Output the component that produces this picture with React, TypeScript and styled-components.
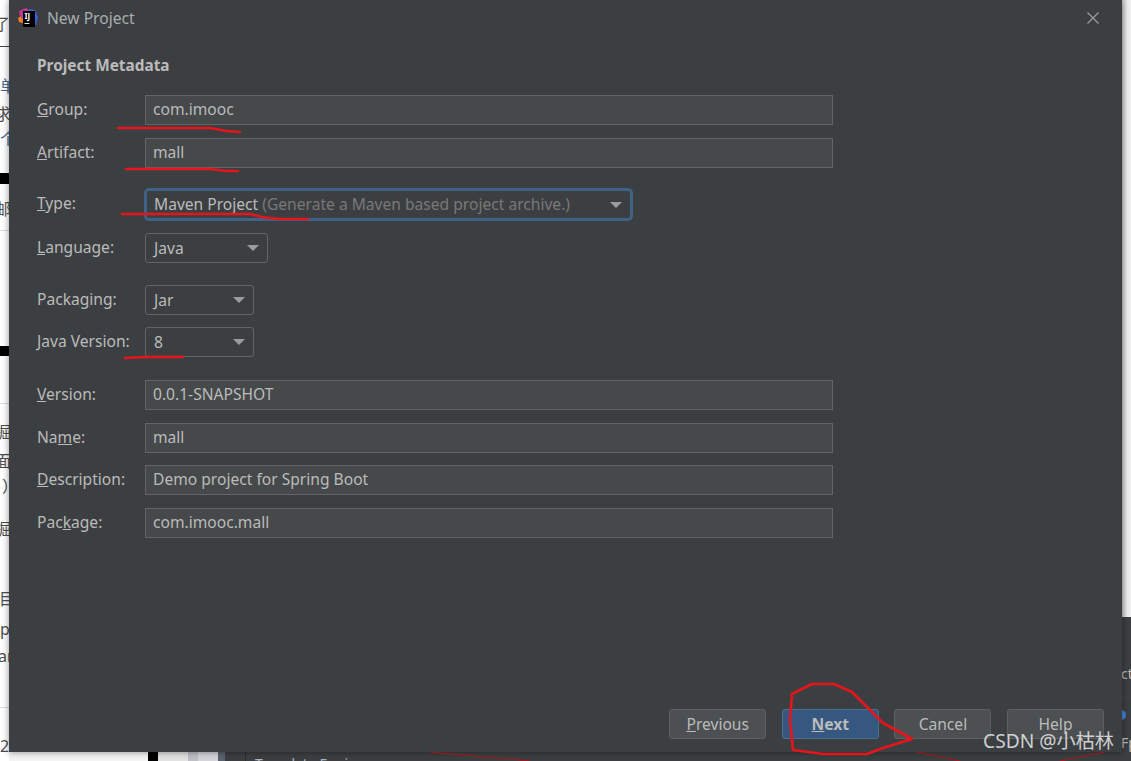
import styled, { createGlobalStyle } from "styled-components";

const GlobalStyle = createGlobalStyle`
  html, body {
    margin: 0;
    padding: 0;
    background: #fff;
  }
`;

const uiFont = `"Noto Sans", "Noto Sans CJK SC", sans-serif`;

const Page = styled.div`
  position: relative;
  width: 1131px;
  height: 761px;
  overflow: hidden;
  display: flex;
  background: #fff;
  font-family: ${uiFont};
`;

// what is left of the blog page behind the dialog
const LeftStrip = styled.div`
  width: 9px;
  height: 761px;
  overflow: hidden;
  display: flex;
  flex-direction: column;
  flex-shrink: 0;
`;

const Frag = styled.div<{ $gap: number; $shift?: number; $blue?: boolean }>`
  margin-top: ${(p) => p.$gap}px;
  margin-left: ${(p) => p.$shift ?? 0}px;
  height: 18px;
  flex-shrink: 0;
  line-height: 18px;
  font-size: 16px;
  white-space: nowrap;
  color: ${(p) => (p.$blue ? "#4a6a94" : "#4d4d4d")};
`;

const BlackBar = styled.div<{ $gap: number; $h: number }>`
  margin-top: ${(p) => p.$gap}px;
  height: ${(p) => p.$h}px;
  flex-shrink: 0;
  background: #000;
`;

const Rule = styled.div<{ $gap: number; $dark?: boolean }>`
  margin-top: ${(p) => p.$gap}px;
  height: 1px;
  flex-shrink: 0;
  background: ${(p) => (p.$dark ? "#444" : "#ddd")};
`;

const MiddleColumn = styled.div`
  flex: 1;
  display: flex;
  align-items: flex-end;
`;

const BottomStrip = styled.div`
  display: flex;
  width: 100%;
  height: 9px;
  overflow: hidden;
`;

const Segment = styled.div<{ $w: number; $bg: string }>`
  width: ${(p) => p.$w}px;
  flex-shrink: 0;
  background: ${(p) => p.$bg};
`;

const EditorPiece = styled.div`
  flex: 1;
  background: #3c3f41;
  padding-left: 9px;
  font-size: 14px;
  line-height: 15px;
  padding-top: 4px;
  color: #a9b7c6;
  white-space: nowrap;
`;

const RightStrip = styled.div`
  width: 9px;
  flex-shrink: 0;
  height: 761px;
  display: flex;
  flex-direction: column;
  background: linear-gradient(90deg, #c9c9c9, #ececec 5px, #f2f2f2);
`;

const RightDark = styled.div`
  margin-top: 617px;
  flex: 1;
  background: #3c3f41;
  overflow: hidden;
  display: flex;
  flex-direction: column;
`;

const RightText = styled.div<{ $gap: number }>`
  margin-top: ${(p) => p.$gap}px;
  margin-left: -1px;
  font-size: 14px;
  line-height: 16px;
  color: #bbb;
  white-space: nowrap;
`;

const RightDot = styled.div`
  margin-top: 12px;
  margin-left: -6px;
  width: 10px;
  height: 10px;
  border-radius: 50%;
  background: #3f83d8;
`;

const Dialog = styled.div`
  position: absolute;
  left: 9px;
  top: 0;
  width: 1113px;
  height: 752px;
  display: flex;
  flex-direction: column;
  background: #3c3f41;
  box-shadow: 0 0 7px rgba(0, 0, 0, 0.45);
  color: #bbbbbb;
  font-size: 15.6px;
`;

const TitleBar = styled.div`
  height: 36px;
  flex-shrink: 0;
  display: flex;
  align-items: center;
  padding-left: 9px;
  padding-right: 23px;
  gap: 9px;
`;

const DialogTitle = styled.div`
  flex: 1;
  font-size: 15.6px;
  color: #a9adb0;
`;

const Form = styled.div`
  display: flex;
  flex-direction: column;
  padding-left: 28px;
`;

const SectionTitle = styled.div`
  margin-top: 19px;
  height: 21px;
  line-height: 21px;
  font-size: 15.4px;
  font-weight: 700;
  color: #bbbbbb;
`;

const Row = styled.div<{ $top: number }>`
  margin-top: ${(p) => p.$top}px;
  height: 30px;
  display: flex;
  align-items: center;
`;

const Label = styled.label`
  width: 108px;
  flex-shrink: 0;
  font-size: 15.6px;
  line-height: 28px;
  margin-top: -2px;
  color: #bbbbbb;
`;

const TextField = styled.div`
  width: 688px;
  height: 30px;
  box-sizing: border-box;
  border: 1px solid #646464;
  background: #45494a;
  padding-left: 7px;
  line-height: 27px;
  font-size: 15.6px;
  color: #bbbbbb;
`;

const Combo = styled.div<{ $w: number }>`
  width: ${(p) => p.$w}px;
  height: 30px;
  box-sizing: border-box;
  border: 1px solid #646464;
  border-radius: 3px;
  background: #3c3f41;
  padding: 0 8px 0 8px;
  display: flex;
  align-items: center;
  justify-content: space-between;
  font-size: 15.6px;
  line-height: 26px;
  color: #bbbbbb;
`;

const FocusCombo = styled(Combo)`
  height: 29px;
  margin-left: 1px;
  margin-top: 1px;
  border-color: #3f6286;
  box-shadow: 0 0 0 2px #3f6286;
  padding-left: 7px;
  padding-right: 8px;
`;

const Hint = styled.span`
  color: #787878;
`;

const ComboValue = styled.span`
  white-space: nowrap;
  margin-top: -1px;
`;

const Arrow = styled.span`
  width: 0;
  height: 0;
  flex-shrink: 0;
  border-left: 6px solid transparent;
  border-right: 6px solid transparent;
  border-top: 6px solid #9a9da0;
`;

const Footer = styled.div`
  margin-top: auto;
  padding: 0 18px 13px 0;
  display: flex;
  justify-content: flex-end;
  gap: 15.6px;
`;

const Button = styled.button<{ $primary?: boolean }>`
  width: 97px;
  height: 30px;
  padding: 0;
  border-radius: 3px;
  border: 1px solid ${(p) => (p.$primary ? "#4c708c" : "#5e6060")};
  background: ${(p) => (p.$primary ? "#365880" : "#4c5052")};
  color: #bbbbbb;
  font-family: ${uiFont};
  font-size: 15.6px;
  font-weight: ${(p) => (p.$primary ? 700 : 400)};
`;

const Scribbles = styled.svg`
  position: absolute;
  left: 0;
  top: 0;
  pointer-events: none;
`;

const Watermark = styled.div`
  position: absolute;
  left: 983px;
  top: 727px;
  font-size: 19.2px;
  line-height: 28px;
  color: rgba(235, 235, 235, 0.85);
  white-space: nowrap;
`;

function Logo() {
  return (
    <svg width="20" height="20" viewBox="0 0 20 20">
      <path d="M1 3 L8 0 L12 3 L10 12 L3 15 Z" fill="#e0316f" />
      <path d="M0 10 L4 8 L5 15 L1 14 Z" fill="#f58220" />
      <path d="M11 1 L17 2 L20 9 L18 17 L10 19 L5 17 Z" fill="#3c5fd8" />
      <path d="M3 2 L9 1 L9 8 L3 10 Z" fill="#b03aa8" />
      <rect x="5" y="3" width="12" height="16" fill="#000" />
      <text x="6.5" y="11" fontSize="8" fontWeight="700" fill="#fff" fontFamily="Noto Sans">
        IJ
      </text>
      <rect x="6.5" y="15" width="5" height="1" fill="#ddd" />
    </svg>
  );
}

function CloseIcon() {
  return (
    <svg width="12" height="12" viewBox="0 0 12 12">
      <path d="M0.5 0.5 L11.5 11.5 M11.5 0.5 L0.5 11.5" stroke="#9a9da0" strokeWidth="1.2" />
    </svg>
  );
}

export default function App() {
  return (
    <Page>
      <GlobalStyle />
      <LeftStrip>
        <Frag $gap={15} $shift={-6}>了</Frag>
        <Rule $gap={13} $dark />
        <Frag $gap={30} $blue>单</Frag>
        <Frag $gap={10} $shift={-5}>求</Frag>
        <Frag $gap={7} $blue>个</Frag>
        <BlackBar $gap={25} $h={11} />
        <Frag $gap={16} $shift={-5}>邮</Frag>
        <Rule $gap={12} />
        <BlackBar $gap={115} $h={10} />
        <Rule $gap={47} />
        <Frag $gap={19} $shift={-5}>掘</Frag>
        <Frag $gap={11} $shift={-5}>面</Frag>
        <Frag $gap={7} $shift={2}>）</Frag>
        <Frag $gap={25} $shift={-5}>掘</Frag>
        <Frag $gap={52} $shift={-1}>目</Frag>
        <Frag $gap={12} $shift={0}>p</Frag>
        <Frag $gap={9} $shift={-2}>an</Frag>
        <Rule $gap={42} />
        <Frag $gap={29}>21</Frag>
      </LeftStrip>

      <MiddleColumn>
        <BottomStrip>
          <Segment $w={139} $bg="#f4f4f4" />
          <Segment $w={10} $bg="#000" />
          <Segment $w={30} $bg="#e2e2e2" />
          <Segment $w={10} $bg="#bfc0c6" />
          <Segment $w={20} $bg="#d4d4da" />
          <Segment $w={7} $bg="#5a6270" />
          <Segment $w={20} $bg="#3c3f41" />
          <Segment $w={1} $bg="#2b2b2b" />
          <EditorPiece>Template Engine</EditorPiece>
        </BottomStrip>
      </MiddleColumn>

      <RightStrip>
        <RightDark>
          <RightText $gap={49}>ct</RightText>
          <Rule $gap={15} $dark />
          <RightDot />
          <RightText $gap={15}>Fp</RightText>
        </RightDark>
      </RightStrip>

      <Dialog>
        <TitleBar>
          <Logo />
          <DialogTitle>New Project</DialogTitle>
          <CloseIcon />
        </TitleBar>
        <Form>
          <SectionTitle>Project Metadata</SectionTitle>
          <Row $top={19}>
            <Label><u>G</u>roup:</Label>
            <TextField>com.imooc</TextField>
          </Row>
          <Row $top={13}>
            <Label><u>A</u>rtifact:</Label>
            <TextField>mall</TextField>
          </Row>
          <Row $top={21}>
            <Label><u>T</u>ype:</Label>
            <FocusCombo $w={485}>
              <ComboValue>Maven Project <Hint>(Generate a Maven based project archive.)</Hint></ComboValue>
              <Arrow />
            </FocusCombo>
          </Row>
          <Row $top={14}>
            <Label><u>L</u>anguage:</Label>
            <Combo $w={123}>
              <ComboValue>Java</ComboValue>
              <Arrow />
            </Combo>
          </Row>
          <Row $top={22}>
            <Label>Packa<u>g</u>ing:</Label>
            <Combo $w={109}>
              <ComboValue>Jar</ComboValue>
              <Arrow />
            </Combo>
          </Row>
          <Row $top={12}>
            <Label><u>J</u>ava Version:</Label>
            <Combo $w={109}>
              <ComboValue>8</ComboValue>
              <Arrow />
            </Combo>
          </Row>
          <Row $top={23}>
            <Label><u>V</u>ersion:</Label>
            <TextField>0.0.1-SNAPSHOT</TextField>
          </Row>
          <Row $top={13}>
            <Label>Na<u>m</u>e:</Label>
            <TextField>mall</TextField>
          </Row>
          <Row $top={12}>
            <Label><u>D</u>escription:</Label>
            <TextField>Demo project for Spring Boot</TextField>
          </Row>
          <Row $top={13}>
            <Label>Pac<u>k</u>age:</Label>
            <TextField>com.imooc.mall</TextField>
          </Row>
        </Form>
        <Footer>
          <Button><u>P</u>revious</Button>
          <Button $primary><u>N</u>ext</Button>
          <Button>Cancel</Button>
          <Button>Help</Button>
        </Footer>
      </Dialog>

      <Scribbles width="1131" height="761" viewBox="0 0 1131 761" fill="none">
        <g stroke="#e8141c" strokeWidth="2.6" strokeLinecap="round" strokeLinejoin="round">
          <path d="M118 128 L210 128 L226 131 L240 132" />
          <path d="M126 169 L210 169 L226 171 L238 171" />
          <path d="M122 214 L250 214 L262 217 L278 219 L308 219" />
          <path d="M125 358 L145 357 L183 357" />
          <path d="M792 694 L812 684 L834 684 L852 692 L883 723 L912 739 L883 748 L867 754 L823 754 L793 750 L790 720 Z" />
        </g>
        <path d="M917 752 L960 761 M1060 761 L1105 752 M430 752 L530 761" stroke="#a8141c" strokeWidth="1" />
      </Scribbles>
      <Watermark>CSDN @小枯林</Watermark>
    </Page>
  );
}
